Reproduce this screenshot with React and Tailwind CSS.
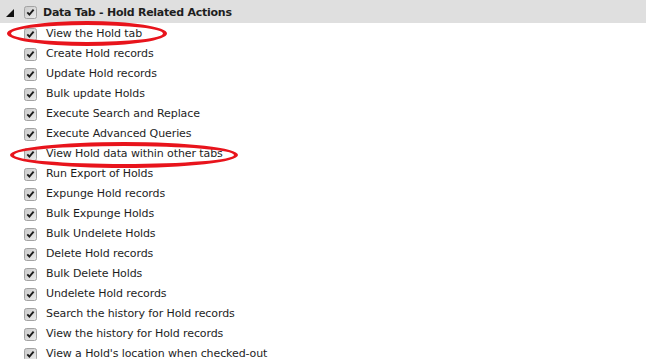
const ITEMS = [
  "View the Hold tab",
  "Create Hold records",
  "Update Hold records",
  "Bulk update Holds",
  "Execute Search and Replace",
  "Execute Advanced Queries",
  "View Hold data within other tabs",
  "Run Export of Holds",
  "Expunge Hold records",
  "Bulk Expunge Holds",
  "Bulk Undelete Holds",
  "Delete Hold records",
  "Bulk Delete Holds",
  "Undelete Hold records",
  "Search the history for Hold records",
  "View the history for Hold records",
  "View a Hold's location when checked-out",
];

function CheckBox() {
  return (
    <svg width="13" height="13" viewBox="0 0 13 13" className="shrink-0">
      <defs>
        <linearGradient id="cb" x1="0" y1="0" x2="1" y2="1">
          <stop offset="0" stopColor="#c9c9c9" />
          <stop offset="1" stopColor="#ececec" />
        </linearGradient>
      </defs>
      <rect x="0.5" y="0.5" width="12" height="12" rx="2" fill="url(#cb)" stroke="#a3a3a3" />
      <path d="M3.3 6.4 L5.4 8.6 L9.6 3.6" fill="none" stroke="#1c1c1c" strokeWidth="1.9" />
    </svg>
  );
}

export default function App() {
  return (
    <div
      className="relative w-[647px] h-[359px] bg-white overflow-hidden text-[#1e1e1e] text-[11px] tracking-[-0.1px]"
      style={{ fontFamily: '"DejaVu Sans", Verdana, sans-serif' }}
    >
      {/* header row */}
      <div className="flex items-center h-[23px] w-[646px] pt-[3px] bg-[#dfdfdf]">
        <svg width="9" height="9" viewBox="0 0 9 9" className="ml-[6px] mt-[1px]">
          <path d="M8 0 L8 8 L0 8 Z" fill="#111" />
        </svg>
        <div className="ml-[9px] -mt-[1px]">
          <CheckBox />
        </div>
        <span className="ml-[6px] font-bold tracking-[-0.25px]">Data Tab - Hold Related Actions</span>
      </div>

      {/* permissions list */}
      <ul className="mt-[1px]">
        {ITEMS.map((label) => (
          <li key={label} className="flex items-center h-5 pl-[24px]">
            <CheckBox />
            <span className="ml-[9px]">{label}</span>
          </li>
        ))}
      </ul>

      {/* red annotation circles */}
      <div className="absolute left-[7px] top-[21px] w-[160px] h-[25px] rounded-[50%] border-4 border-[#e8141c]" />
      <div className="absolute left-[10px] top-[142px] w-[228px] h-[26px] rounded-[50%] border-4 border-[#e8141c]" />
    </div>
  );
}
